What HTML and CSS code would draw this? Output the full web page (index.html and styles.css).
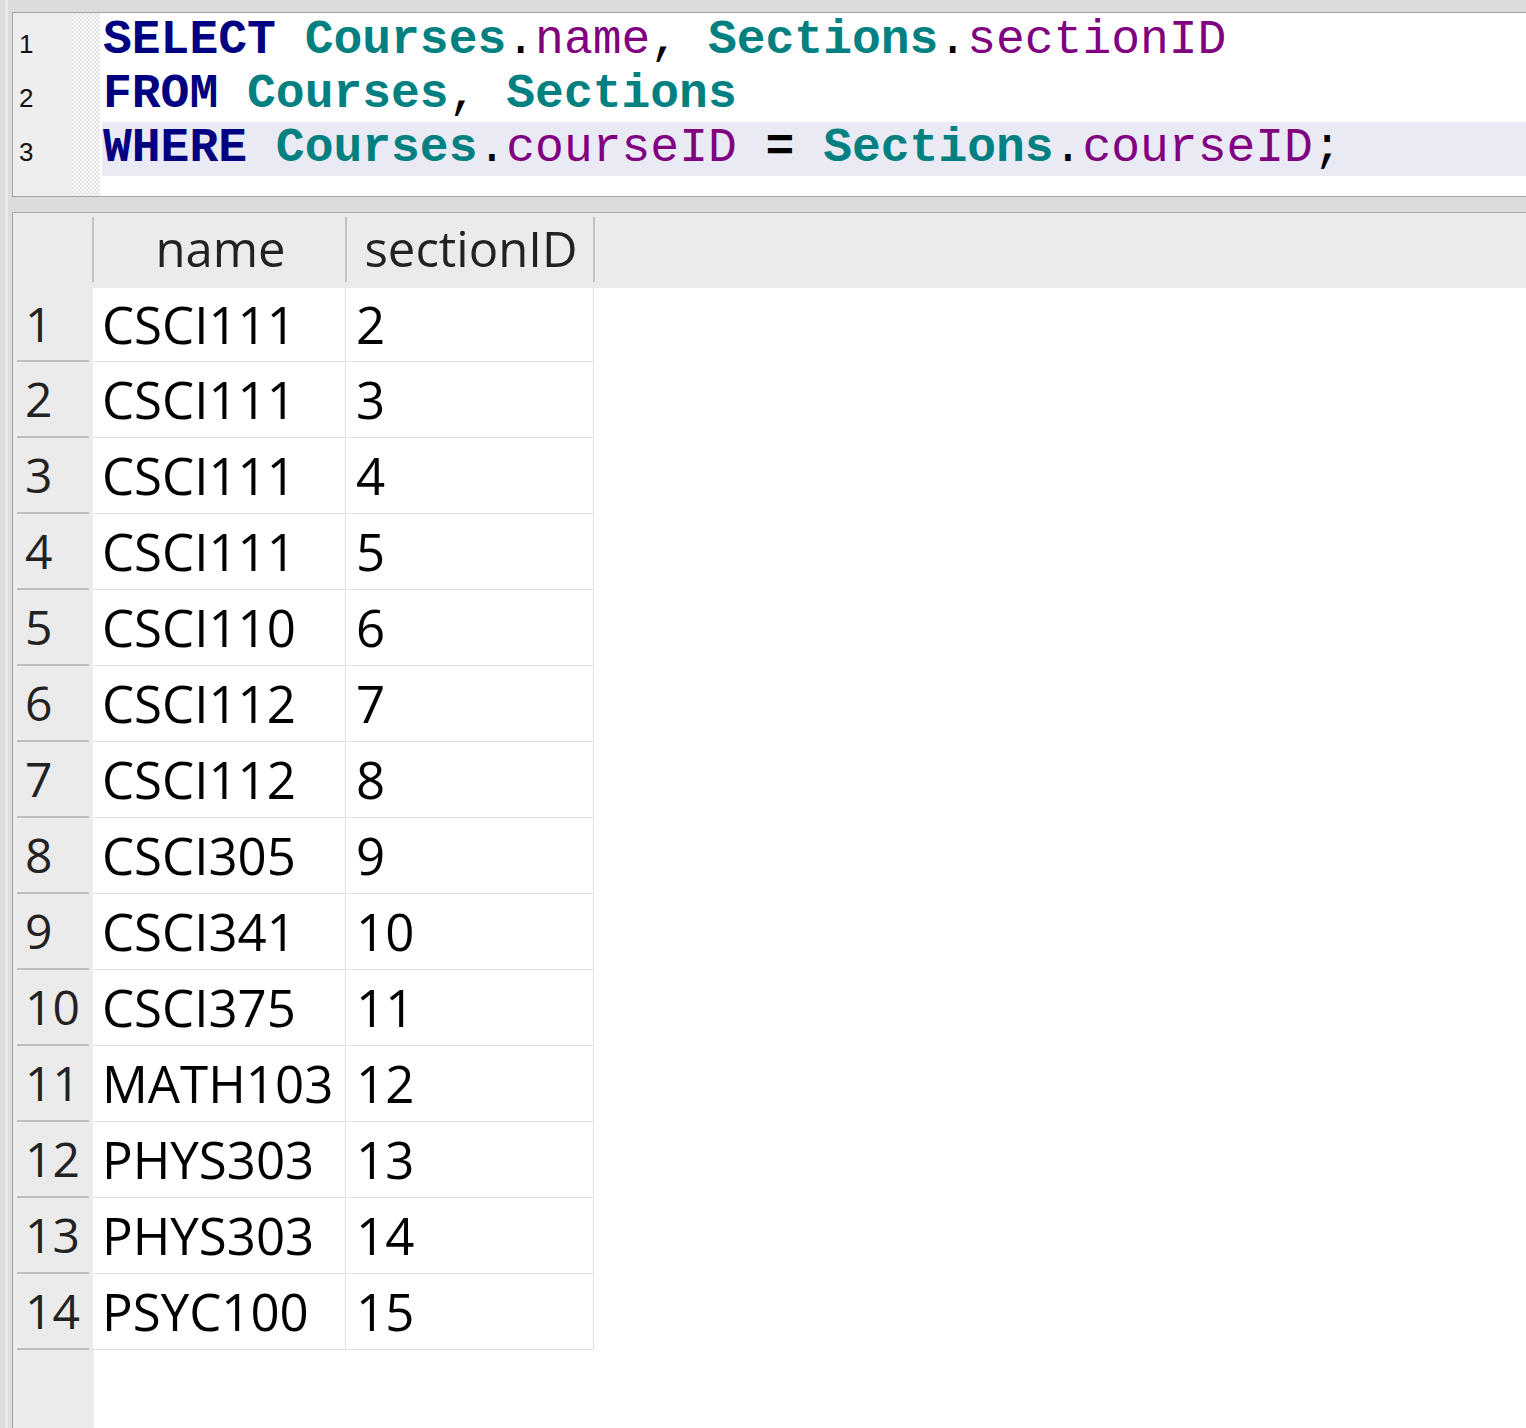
FILE: index.html
```html
<!DOCTYPE html>
<html>
<head>
<meta charset="utf-8">
<link rel="stylesheet" href="styles.css">
</head>
<body>
<div class="app">
  <div class="editor">
    <div class="gutter">
      <div class="ln">1</div>
      <div class="ln">2</div>
      <div class="ln">3</div>
    </div>
    <div class="fold"></div>
    <div class="code">
      <div class="line"><span class="kw">SELECT</span> <span class="tb">Courses</span>.<span class="col">name</span>, <span class="tb">Sections</span>.<span class="col">sectionID</span></div>
      <div class="line"><span class="kw">FROM</span> <span class="tb">Courses</span>, <span class="tb">Sections</span></div>
      <div class="line current"><span class="kw">WHERE</span> <span class="tb">Courses</span>.<span class="col">courseID</span> <span class="op">=</span> <span class="tb">Sections</span>.<span class="col">courseID</span>;</div>
    </div>
  </div>
  <div class="results">
    <div class="hdr">
      <div class="hc rnh"></div>
      <div class="hc c1">name</div>
      <div class="hc c2">sectionID</div>
    </div>
    <div class="row first"><div class="rn">1</div><div class="cell c1">CSCI111</div><div class="cell c2">2</div></div>
    <div class="row"><div class="rn">2</div><div class="cell c1">CSCI111</div><div class="cell c2">3</div></div>
    <div class="row"><div class="rn">3</div><div class="cell c1">CSCI111</div><div class="cell c2">4</div></div>
    <div class="row"><div class="rn">4</div><div class="cell c1">CSCI111</div><div class="cell c2">5</div></div>
    <div class="row"><div class="rn">5</div><div class="cell c1">CSCI110</div><div class="cell c2">6</div></div>
    <div class="row"><div class="rn">6</div><div class="cell c1">CSCI112</div><div class="cell c2">7</div></div>
    <div class="row"><div class="rn">7</div><div class="cell c1">CSCI112</div><div class="cell c2">8</div></div>
    <div class="row"><div class="rn">8</div><div class="cell c1">CSCI305</div><div class="cell c2">9</div></div>
    <div class="row"><div class="rn">9</div><div class="cell c1">CSCI341</div><div class="cell c2">10</div></div>
    <div class="row"><div class="rn">10</div><div class="cell c1">CSCI375</div><div class="cell c2">11</div></div>
    <div class="row"><div class="rn">11</div><div class="cell c1">MATH103</div><div class="cell c2">12</div></div>
    <div class="row"><div class="rn">12</div><div class="cell c1">PHYS303</div><div class="cell c2">13</div></div>
    <div class="row"><div class="rn">13</div><div class="cell c1">PHYS303</div><div class="cell c2">14</div></div>
    <div class="row"><div class="rn">14</div><div class="cell c1">PSYC100</div><div class="cell c2">15</div></div>
  </div>
</div>
</body>
</html>
```
FILE: styles.css
```css
* { box-sizing: border-box; }
html, body { margin: 0; height: 100%; }
body {
  background: linear-gradient(to right, #dcdcdc 5px, #e8e8e8 5px, #e8e8e8 8px, #dcdcdc 8px) #dcdcdc;
  overflow: hidden;
}
.app {
  height: 1428px;
  padding: 12px 0 0 12px;
  display: flex;
  flex-direction: column;
}
.editor {
  height: 185px;
  border-top: 1px solid #a4a4a4;
  border-left: 1px solid #a4a4a4;
  border-bottom: 1px solid #a4a4a4;
  background: #fff;
  display: flex;
}
.gutter {
  width: 59px;
  background: #eeeeee;
  padding: 4px 0 0 6px;
  font-family: "Liberation Sans", Arial, sans-serif;
  font-size: 26px;
  color: #111;
}
.ln { height: 54px; line-height: 54px; }
.fold {
  width: 28px;
  background: repeating-conic-gradient(#e2e2e2 0 25%, #fbfbfb 0 50%) 0 0 / 4px 4px;
}
.code {
  flex: 1;
  padding: 1px 0 0 2px;
  font-family: "Liberation Mono", "Courier New", monospace;
  font-size: 48px;
  color: #000;
}
.line { height: 54px; line-height: 52px; padding-left: 1px; white-space: pre; }
.line.current { background: #eaeaf4; }
.kw { color: #000080; font-weight: bold; }
.tb { color: #008080; font-weight: bold; }
.col { color: #800080; }
.op { font-weight: bold; }

.results {
  margin-top: 15px;
  flex: 1;
  border-top: 1px solid #a4a4a4;
  border-left: 1px solid #a4a4a4;
  background: linear-gradient(to right, #ebebeb 81px, #ffffff 81px);
  font-family: "Open Sans", "Noto Sans", sans-serif;
}
.hdr {
  display: flex;
  height: 75px;
  background: #ebebeb;
  color: #222;
  font-size: 49px;
}
.hc {
  line-height: 71px;
  text-align: center;
  background: linear-gradient(#c2c2c2, #c2c2c2) right 0 top 4px / 2px 65px no-repeat;
}
.rnh { width: 81px; }
.hdr .c1 { width: 253px; }
.hdr .c2 { width: 248px; }

.row { display: flex; height: 76px; }
.row.first { height: 74px; }
.rn {
  width: 72px;
  margin: 0 4px;
  padding-left: 8px;
  border-bottom: 2px solid #bdbdbd;
  font-size: 48px;
  color: #222;
  line-height: 74px;
}
.row.first .rn { line-height: 72px; }
.cell {
  border-bottom: 1px solid #e2e2e2;
  border-right: 1px solid #e2e2e2;
  background: #fff;
  font-size: 51px;
  color: #000;
  line-height: 75px;
  padding-left: 9px;
}
.row.first .cell { line-height: 73px; }
.row .c1 { width: 253px; }
.row .c2 { width: 248px; padding-left: 10px; }
```
